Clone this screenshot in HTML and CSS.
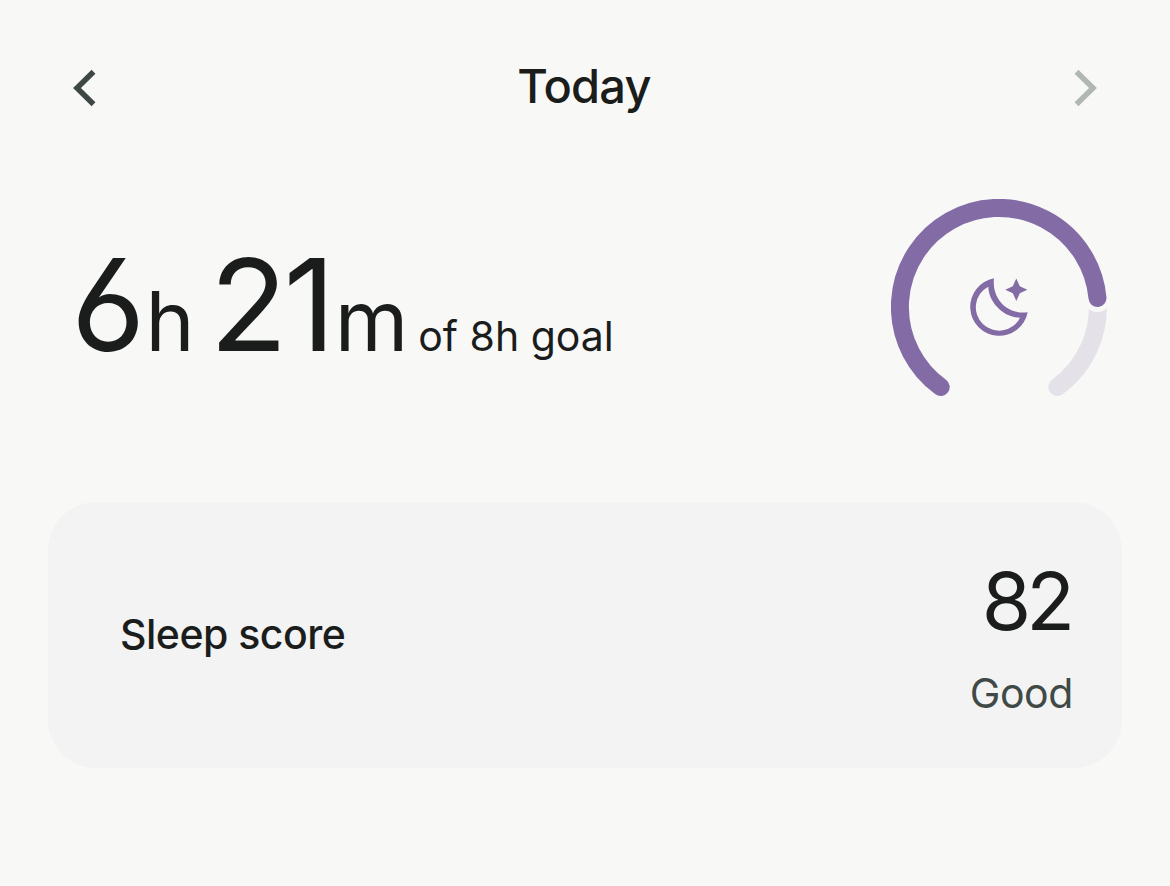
FILE: index.html
```html
<!DOCTYPE html>
<html lang="en">
<head>
  <meta charset="utf-8">
  <meta name="viewport" content="width=device-width, initial-scale=1">
  <title>Sleep</title>
  <link rel="stylesheet" href="styles.css">
</head>
<body>
  <header class="day-nav">
    <button class="nav-btn" aria-label="Previous day">
      <svg width="24" height="40" viewBox="0 0 24 40"><path d="M21.5 3.8 L5 20 L21.5 36.2"/></svg>
    </button>
    <h1 class="day-title">Today</h1>
    <button class="nav-btn disabled" aria-label="Next day" disabled>
      <svg width="24" height="40" viewBox="0 0 24 40"><path d="M2.5 3.8 L19 20 L2.5 36.2"/></svg>
    </button>
  </header>

  <section class="summary">
    <p class="duration">
      <span class="num hours">6</span><span class="unit">h</span>
      <span class="num">21</span><span class="unit minutes">m</span>
      <span class="goal">of 8h goal</span>
    </p>

    <svg class="ring" width="216" height="216" viewBox="0 0 216 216">
      <path class="ring-track" d="M206.5 99 A99 99 0 0 1 166.3 188"/>
      <circle class="ring-gap" cx="206.5" cy="99" r="14"/>
      <path class="ring-value" d="M49.7 188 A99 99 0 1 1 206.5 99"/>
      <!-- moon and star -->
      <path class="moon" d="M103 79.3 A29 29 0 1 0 136.7 113.3 C116.5 116 100.5 99.5 103 79.3 Z M97.3 87.7 A23.3 23.3 0 1 0 129 118.7 C113 118.5 97.5 103.5 97.3 87.7 Z"/>
      <path class="moon" d="M125.3 79.5 L128.8 87.3 L136.4 90.8 L128.8 94.3 L125.3 102 L121.8 94.3 L114.2 90.8 L121.8 87.3 Z"/>
    </svg>
  </section>

  <section class="card">
    <h2 class="card-title">Sleep score</h2>
    <div class="score">
      <span class="score-value">82</span>
      <span class="score-label">Good</span>
    </div>
  </section>
</body>
</html>
```
FILE: styles.css
```css
* {
  box-sizing: border-box;
}

body {
  margin: 0;
  padding: 48px;
  height: 100vh;
  overflow: hidden;
  background: #f8f9f7;
  color: #1b1d1c;
  font-family: Inter, "Open Sans", sans-serif;
}

h1, h2, p {
  margin: 0;
}

.day-nav {
  display: flex;
  align-items: center;
  justify-content: space-between;
  height: 80px;
  padding: 0 24px;
}

.nav-btn {
  display: flex;
  padding: 0;
  border: 0;
  background: none;
}

.nav-btn path {
  fill: none;
  stroke: #3d4845;
  stroke-width: 5.5;
}

.nav-btn.disabled path {
  stroke: #b1b7b3;
}

.day-title {
  padding: 0 2px 4px 0;
  font-size: 47px;
  font-weight: 500;
  line-height: 76px;
  letter-spacing: -0.8px;
}

.summary {
  display: flex;
  justify-content: space-between;
  height: 216px;
  margin-top: 71px;
  padding: 0 15px 0 24px;
}

.duration {
  display: flex;
  align-items: baseline;
  padding-top: 28px;
  line-height: 156px;
}

.num {
  margin-right: 3px;
  font-size: 128px;
  font-weight: 430;
  letter-spacing: -4px;
  font-feature-settings: "ss01";
}

.hours {
  margin: 0 0 0 -1px;
  letter-spacing: 0;
}

.unit {
  margin-right: 15px;
  font-size: 83px;
}

.minutes {
  margin-right: 10px;
  font-size: 84px;
}

.goal {
  font-size: 41px;
}

.ring-track,
.ring-value {
  fill: none;
  stroke-width: 18;
  stroke-linecap: round;
}

.ring-track {
  stroke: #e4e1e9;
}

.ring-value {
  stroke: #836ca6;
}

.ring-gap {
  fill: #f8f9f7;
}

.moon {
  fill: #836ca6;
  fill-rule: evenodd;
}

.card {
  display: flex;
  align-items: center;
  justify-content: space-between;
  height: 266px;
  margin-top: 87px;
  padding: 0 50px 0 72px;
  border-radius: 48px;
  background: #f3f3f3;
}

.card-title {
  padding-bottom: 2px;
  font-size: 41px;
  font-weight: 500;
  letter-spacing: -0.5px;
}

.score {
  display: flex;
  flex-direction: column;
  align-items: flex-end;
  padding-top: 20px;
}

.score-value {
  margin-right: 2px;
  font-size: 80px;
  font-weight: 430;
  line-height: 96px;
  letter-spacing: -5px;
}

.score-label {
  margin-right: -1px;
  color: #3f4946;
  font-size: 41px;
  line-height: 88px;
  letter-spacing: -0.4px;
}
```
